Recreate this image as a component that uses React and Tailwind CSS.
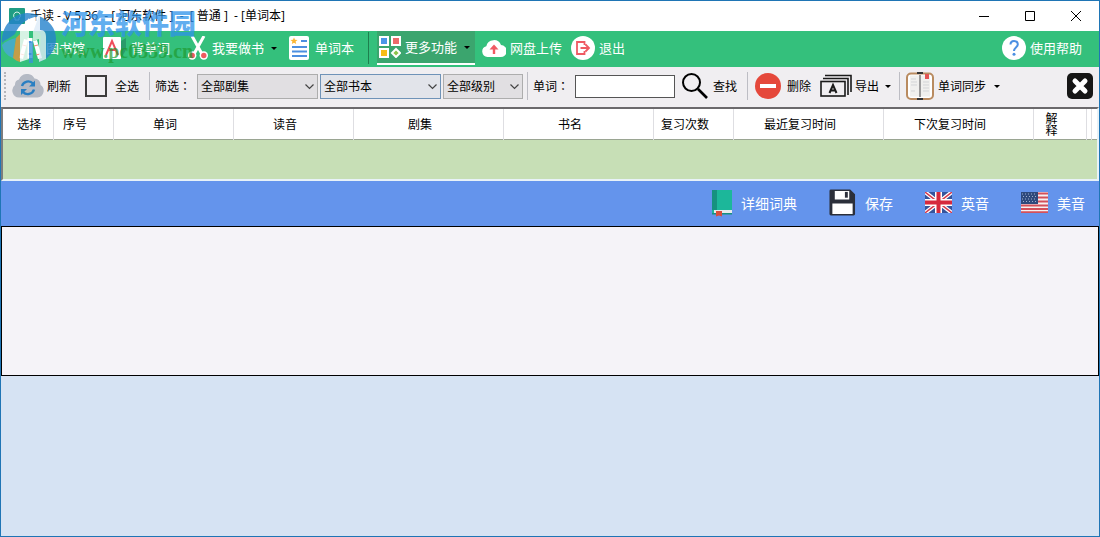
import React, { useState } from "react";

const columns = [
  { name: "选择", width: "w-[50px]", pad: "pl-[3px]" },
  { name: "序号", width: "w-[60px]", pad: "pr-4" },
  { name: "单词", width: "w-[120px]", pad: "pr-4" },
  { name: "读音", width: "w-[120px]", pad: "pr-4" },
  { name: "剧集", width: "w-[150px]", pad: "pr-4" },
  { name: "书名", width: "w-[150px]", pad: "pr-4" },
  { name: "复习次数", width: "w-[80px]", pad: "pr-4" },
  { name: "最近复习时间", width: "w-[150px]", pad: "pr-4" },
  { name: "下次复习时间", width: "w-[150px]", pad: "pr-4" },
  { name: "解释", width: "w-[53px]", pad: "pl-3 pr-7" },
  { name: "", width: "w-[5px]", pad: "" },
  { name: "", width: "w-auto", pad: "" },
];

function Caret() {
  return (
    <svg className="w-[6px] h-[3px] shrink-0" viewBox="0 0 6 3">
      <path d="M0 0h6L3 3z" fill="#000" />
    </svg>
  );
}

function LibraryIcon() {
  return (
    <svg className="w-6 h-6 shrink-0" viewBox="0 0 24 24">
      <path d="M6 3l4 1-5 19-4-1z" fill="#fff" />
      <path d="M9.500 2h5v20h-5z" fill="#fff" />
      <path d="M15 5l4-1 5 18-4 1z" fill="#fff" />
      <path d="M4.500 9l4 1M2.500 18l4 1M16 10l4-1M18 19l4-1" stroke="#ef8a72" />
      <path d="M10.500 6h3M10.500 18h3" stroke="#4c8fe0" strokeWidth="2" />
    </svg>
  );
}

function LetterIcon() {
  return (
    <svg className="w-6 h-6 shrink-0" viewBox="0 0 24 24">
      <path d="M18 5l5-3v12l-5 8z" fill="#2a9a6a" />
      <rect x="0" y="1" width="18" height="22" rx="1" fill="#fff" />
      <path d="M3 19L9 5l6 14M5 14h8" fill="none" stroke="#ef4d5c" strokeWidth="2" />
    </svg>
  );
}

function ScissorsIcon() {
  return (
    <svg className="w-5 h-6 shrink-0" viewBox="0 0 20 24">
      <path d="M4 0l10 18M16 0L6 18" stroke="#fff" strokeWidth="3" />
      <circle cx="4.200" cy="19.500" r="4.200" fill="#fff" />
      <circle cx="15.800" cy="19.500" r="4.200" fill="#fff" />
      <circle cx="4.200" cy="19.500" r="2.700" fill="#ee5a5e" />
      <circle cx="15.800" cy="19.500" r="2.700" fill="#ee5a5e" />
    </svg>
  );
}

function WordListIcon() {
  return (
    <svg className="w-[22px] h-6 shrink-0" viewBox="0 0 22 24">
      <rect width="20" height="24" rx="2" fill="#fff" />
      <path d="M5 1.500l1 2.300 2.500.2-1.900 1.600.6 2.500L5 6.800 2.800 8.100l.6-2.500L1.500 4 4 3.800z" fill="#fbb634" />
      <path d="M12 5h6M3 11h15M3 15.500h15M3 20h15" stroke="#4c8fe0" strokeWidth="1.800" />
    </svg>
  );
}

function MoreIcon() {
  return (
    <svg className="w-[22px] h-[22px] shrink-0" viewBox="0 0 22 22" stroke="#fff" strokeWidth="2">
      <rect x="1" y="1" width="8" height="8" fill="#4b96e8" />
      <rect x="13" y="1" width="8" height="8" fill="#ec6b6b" />
      <rect x="1" y="13" width="8" height="8" fill="#f6bd16" />
      <path d="M17 13l4 4-4 4-4-4z" fill="#8bc34a" />
    </svg>
  );
}

function UploadIcon() {
  return (
    <svg className="w-6 h-6 shrink-0" viewBox="0 0 24 24">
      <path d="M5.500 21a5.500 5.500 0 0 1-1.200-10.800A7.700 7.700 0 0 1 19 9 6 6 0 0 1 18.500 21z" fill="#fff" />
      <path d="M12 18v-6" stroke="#ef5a63" strokeWidth="2.400" />
      <path d="M7.500 13.500L12 8.500l4.500 5z" fill="#ef5a63" />
    </svg>
  );
}

function ExitIcon() {
  return (
    <svg className="w-6 h-6 shrink-0" viewBox="0 0 24 24">
      <circle cx="12" cy="12" r="12" fill="#fff" />
      <path d="M13.500 9V6H6v12h7.500v-3M9.500 12h8M14.500 8.500l3.500 3.500-3.500 3.500" fill="none" stroke="#ef5a63" strokeWidth="1.800" />
    </svg>
  );
}

function HelpIcon() {
  return (
    <svg className="w-6 h-6 shrink-0" viewBox="0 0 24 24">
      <circle cx="12" cy="12" r="12" fill="#fff" />
      <path d="M8.500 8.500C8.500 6 10 5 12 5s3.800 1.200 3.800 3.500C15.800 11 12 11.500 12 15" fill="none" stroke="#4b8fe2" strokeWidth="2" />
      <circle cx="12" cy="18.300" r="1.500" fill="#4b8fe2" />
    </svg>
  );
}

function RefreshIcon() {
  return (
    <svg className="w-8 h-6 shrink-0" viewBox="0 0 32 24">
      <path d="M7 23.500A7 7 0 0 1 3 11 5.500 5.500 0 0 1 7 5.500a8.500 8.500 0 0 1 15.500-1 6 6 0 0 1 6 6.500 6.800 6.800 0 0 1-3 12.500z" fill="#b4b9c4" />
      <path d="M10 12a6.500 6.500 0 0 1 11-2.500M22 15.500a6.500 6.500 0 0 1-11 2.500" fill="none" stroke="#2a7fc2" strokeWidth="2.400" />
      <path d="M23 6.500v6h-6zM9 21v-6h6z" fill="#2a7fc2" />
    </svg>
  );
}

function SearchIcon() {
  return (
    <svg className="w-7 h-7 shrink-0" viewBox="0 0 28 28" fill="none" stroke="#000">
      <circle cx="10.500" cy="10.500" r="8.500" strokeWidth="2" />
      <path d="M17 17l9 9" strokeWidth="2.600" />
    </svg>
  );
}

function DeleteIcon() {
  return (
    <svg className="w-[26px] h-[26px] shrink-0" viewBox="0 0 26 26">
      <circle cx="13" cy="13" r="13" fill="#e5483b" />
      <rect x="5" y="11" width="16" height="4" fill="#fff" />
    </svg>
  );
}

function ExportIcon() {
  return (
    <svg className="w-8 h-6 shrink-0" viewBox="0 0 32 24" fill="none" stroke="#1a1a1a">
      <path d="M5 1.500h26V18M3 4.500h25V21" strokeWidth="1.600" />
      <rect x="1" y="7.500" width="24" height="14.500" strokeWidth="1.600" />
      <path d="M9.500 19l3.500-8 3.500 8M11 16.500h4" strokeWidth="2" />
    </svg>
  );
}

function SyncIcon() {
  return (
    <svg className="w-7 h-7 shrink-0" viewBox="0 0 28 28">
      <rect x="1" y="1.500" width="26" height="25.500" rx="4" fill="#fff" stroke="#b98b60" strokeWidth="2" />
      <path d="M4 3.500h9v21H4zM15 3.500h9v21h-9z" fill="#f0f0ee" />
      <path d="M14 3v22" stroke="#9c9c9c" strokeWidth="2" />
      <path d="M5 7h5M5 10h6M5 13h6M5 19h4M17 10h6M17 13h6M17 16h6M17 19h6" stroke="#d3d5d7" />
      <path d="M11 1h6M11 27h6" stroke="#333" strokeWidth="2" />
      <path d="M19 2h4v5h-4z" fill="#e35454" />
    </svg>
  );
}

function CloseBoxIcon() {
  return (
    <svg className="w-7 h-7 shrink-0" viewBox="0 0 28 28">
      <rect x="1" y="1" width="26" height="26" rx="5" fill="#161616" />
      <path d="M9 9l10 10M19 9L9 19" stroke="#fff" strokeWidth="5" strokeLinecap="round" />
    </svg>
  );
}

function DictionaryIcon() {
  return (
    <svg className="w-[21px] h-7 shrink-0" viewBox="0 0 21 28">
      <path d="M1 1h20v24H1z" fill="#1cb79a" />
      <path d="M1 1h5v20H1z" fill="#16917f" />
      <path d="M3 21h18v3H3z" fill="#e8ecec" />
      <path d="M1 24h20v1.500H1z" fill="#16917f" />
      <path d="M5 22h6v5.500l-3-1-3 1z" fill="#d84d3d" />
    </svg>
  );
}

function SaveIcon() {
  return (
    <svg className="w-[27px] h-[27px] shrink-0" viewBox="0 0 28 28">
      <path d="M2 .5h20l5 5V26a1.500 1.500 0 0 1-1.500 1.500H2A1.500 1.500 0 0 1 .5 26V2A1.500 1.500 0 0 1 2 .5z" fill="#2b2f3a" />
      <path d="M6 2h15v9H6zM3.500 15h21v11h-21z" fill="#fff" />
      <path d="M16.500 3h3v6h-3z" fill="#2b2f3a" />
    </svg>
  );
}

function UkFlag() {
  return (
    <svg className="w-[27px] h-[21px] shrink-0" viewBox="0 0 27 21">
      <path d="M0 0h27v21H0z" fill="#35549c" />
      <path d="M0 0l27 21M27 0L0 21" stroke="#fff" strokeWidth="4" />
      <path d="M0 0l27 21M27 0L0 21" stroke="#d6394a" strokeWidth="1.400" />
      <path d="M13.500 0v21M0 10.500h27" stroke="#fff" strokeWidth="7" />
      <path d="M13.500 0v21M0 10.500h27" stroke="#d6293d" strokeWidth="4" />
    </svg>
  );
}

function UsFlag() {
  return (
    <svg className="w-[27px] h-[21px] shrink-0" viewBox="0 0 27 21">
      <path d="M0 0h27v21H0z" fill="#f6f1f1" />
      <path d="M0 1.500h27M0 5.500h27M0 9.500h27M0 13.500h27M0 17h27M0 20.300h27" stroke="#d4505a" strokeWidth="1.900" />
      <path d="M0 0h17v12H0z" fill="#2f4a7c" />
      <path d="M1 2h15M2 4.500h14M1 7h15M2 9.500h14" stroke="#9fb0cb" strokeDasharray="1 2" />
    </svg>
  );
}

function MenuButton({ icon, name, caret }) {
  return (
    <button className="flex items-center gap-1 whitespace-nowrap">
      {icon}
      <span>{name}</span>
      {caret && <span className="pl-[3px]"><Caret /></span>}
    </button>
  );
}

function Separator() {
  return <div className="w-px h-7 bg-[#bdbdc4] shrink-0" />;
}

function Colon() {
  return <span className="font-['Noto_Sans_CJK_TC',sans-serif]">：</span>;
}

function Dropdown({ label, width, look }) {
  return (
    <div className={"relative shrink-0 " + width}>
      <select aria-label={label} className={"appearance-none block w-full h-[25px] pl-[3px] border outline-none " + look}>
        <option>{label}</option>
      </select>
      <svg className="absolute right-1 top-[10px] w-[9px] h-[6px] pointer-events-none" viewBox="0 0 9 6">
        <path d="M.5.5l4 4 4-4" fill="none" stroke="#444" strokeWidth="1.200" />
      </svg>
    </div>
  );
}

function TitleBar() {
  return (
    <header className="h-[30px] bg-white flex items-center justify-between pl-2 text-xs text-black">
      <div className="flex items-center gap-[5px]">
        <svg className="w-4 h-4" viewBox="0 0 16 16">
          <rect width="16" height="16" rx="1" fill="#1f9d84" />
          <path d="M8 4a3.500 3.500 0 0 1 2 6.300V12H6v-1.700A3.500 3.500 0 0 1 8 4z" fill="none" stroke="#d7f2ea" />
        </svg>
        <h1 className="whitespace-pre font-['Open_Sans','Noto_Sans_CJK_SC',sans-serif]">千读 - V 5.36  - [ 河东软件 ]  -  [ 普通 ]  - [单词本]</h1>
      </div>
      <div className="flex">
        <button aria-label="最小化" className="w-[46px] h-7 flex items-center justify-center">
          <svg className="w-[10px] h-[10px]" viewBox="0 0 10 10"><path d="M0 5.500h10" stroke="#000" /></svg>
        </button>
        <button aria-label="最大化" className="w-[46px] h-7 flex items-center justify-center">
          <svg className="w-[10px] h-[10px]" viewBox="0 0 10 10"><path d="M.5.5h9v9h-9z" fill="none" stroke="#000" /></svg>
        </button>
        <button aria-label="关闭" className="w-[46px] h-7 flex items-center justify-center">
          <svg className="w-[10px] h-[10px]" viewBox="0 0 10 10"><path d="M0 0l10 10M10 0L0 10" stroke="#000" /></svg>
        </button>
      </div>
    </header>
  );
}

function MenuBar() {
  return (
    <nav className="h-9 pb-[2px] bg-[#34c07c] flex items-center justify-between px-[17px] text-[13px] text-white">
      <div className="flex items-center">
        <div className="flex items-center gap-[18px]">
          <MenuButton icon={<LibraryIcon />} name="图书馆" />
          <MenuButton icon={<LetterIcon />} name="背单词" />
          <MenuButton icon={<ScissorsIcon />} name="我要做书" caret />
        </div>
        <div className="pl-3">
          <MenuButton icon={<WordListIcon />} name="单词本" />
        </div>
        <div className="w-px h-8 ml-[14px] mr-2 bg-[#1d7f4e]" />
        <div className="flex h-[34px] pl-[2px] pr-[5px] bg-[#3ba56e] border-b-2 border-white">
          <MenuButton icon={<MoreIcon />} name="更多功能" caret />
        </div>
        <div className="flex items-center gap-[9px] pl-[7px]">
          <MenuButton icon={<UploadIcon />} name="网盘上传" />
          <MenuButton icon={<ExitIcon />} name="退出" />
        </div>
      </div>
      <MenuButton icon={<HelpIcon />} name="使用帮助" />
    </nav>
  );
}

function ToolBar() {
  const [all, setAll] = useState(false);
  const [word, setWord] = useState("");
  return (
    <div className="h-10 pb-[2px] bg-[#f0eef1] flex items-center justify-between pl-[3px] pr-[5px] text-xs text-black whitespace-nowrap">
      <div className="flex items-center">
        <div className="h-7 border-l-2 border-dotted border-[#b5b5ba] mr-[6px]" />
        <button className="flex items-center gap-[3px]"><RefreshIcon />刷新</button>
        <label className="flex items-center gap-2 ml-[14px] mr-[10px]">
          <input
            type="checkbox"
            checked={all}
            onChange={() => setAll(!all)}
            className="appearance-none w-[22px] h-[22px] border-2 border-[#3c3c3c] checked:bg-[#3c3c3c]"
          />
          全选
        </label>
        <Separator />
        <span className="ml-[5px] w-[42px]">筛选<Colon /></span>
        <div className="flex gap-[2px] mr-1">
          <Dropdown label="全部剧集" width="w-[121px]" look="bg-[#e1dfe2] border-[#adadad]" />
          <Dropdown label="全部书本" width="w-[121px]" look="bg-[#e2e4ea] border-[#6f93b8]" />
          <Dropdown label="全部级别" width="w-[80px]" look="bg-[#e1dfe2] border-[#adadad]" />
        </div>
        <Separator />
        <label className="flex items-center ml-[5px]">
          <span className="w-[42px]">单词<Colon /></span>
          <input
            type="text"
            value={word}
            onChange={(e) => setWord(e.target.value)}
            className="w-[100px] h-[23px] px-1 bg-white border border-[#555] outline-none"
          />
        </label>
        <button className="flex items-center gap-1 ml-[6px] mr-[10px]"><SearchIcon />查找</button>
        <Separator />
        <button className="flex items-center gap-[6px] ml-[7px]"><DeleteIcon />删除</button>
        <button className="flex items-center gap-[3px] ml-[9px] mr-2"><ExportIcon />导出<span className="pl-[3px]"><Caret /></span></button>
        <Separator />
        <button className="flex items-center gap-1 ml-[6px]"><SyncIcon />单词同步<span className="pl-1"><Caret /></span></button>
      </div>
      <button aria-label="关闭单词本"><CloseBoxIcon /></button>
    </div>
  );
}

function WordTable() {
  return (
    <div className="h-[74px] bg-[#c7dfb6] border-2 border-t-[#6b696c] border-l-[#7d7d7d] border-r-[#e8f2f8] border-b-[#e8f2f8]">
      <table className="w-full table-fixed border-collapse bg-white text-xs text-black">
        <thead>
          <tr className="h-[30px] border-b border-[#9aa592]">
            {columns.map((col, i) => (
              <th key={i} className={"p-0 font-normal leading-3 border-r border-[#dedee2] last:border-r-0 " + col.width + " " + col.pad}>
                {col.name}
              </th>
            ))}
          </tr>
        </thead>
      </table>
    </div>
  );
}

function ActionBar() {
  return (
    <div className="h-[45px] pb-[2px] bg-[#6494ec] flex items-center justify-end gap-8 pr-[14px] text-sm text-white">
      <button className="flex items-center gap-[9px]"><DictionaryIcon />详细词典</button>
      <button className="flex items-center gap-[9px]"><SaveIcon />保存</button>
      <button className="flex items-center gap-[9px]"><UkFlag />英音</button>
      <button className="flex items-center gap-[9px]"><UsFlag />美音</button>
    </div>
  );
}

function Watermark() {
  return (
    <div className="absolute left-0 top-0 flex pointer-events-none">
      <svg className="w-[56px] h-[66px]" viewBox="0 0 56 66" opacity=".8">
        <path d="M1 42C0 26 11 13 26 12c5 0 9 1 12 3-12 2-20 8-24 18-3 3-9 5-13 9z" fill="#2583cc" />
        <path d="M1 44c4-4 9-6 14-7l-3 20C6 55 2 50 1 44z" fill="#4aa8d8" />
        <path d="M38 15c10 4 17 12 17 23 0 11-7 20-17 23l2-25c0-4-3-6-8-5z" fill="#2583cc" />
        <path d="M19 30l9-13v41l-9 3z" fill="#fff" />
        <path d="M32 17l7-2v14c5 0 6 3 6 7v22l-7 3V38l-6 2z" fill="#fff" opacity=".85" />
        <path d="M15 37l4-4v28c-3-1-5-2-7-4z" fill="#e8953a" />
        <path d="M28 42l4-2v22h-4z" fill="#3a94d8" />
      </svg>
      <div className="pt-1 pl-1 whitespace-nowrap">
        <p className="text-[27px] leading-9 font-black text-[#2e93ea]/75">河东软件园</p>
        <p className="font-['Liberation_Serif',serif] text-[20px] leading-5 font-bold text-[#1f9a2f]/70">www.pc0359.cn</p>
      </div>
    </div>
  );
}

function App() {
  return (
    <div className="relative min-h-screen flex flex-col bg-[#d6e3f3] border border-[#1f75b5] font-['Noto_Sans_CJK_SC',sans-serif]">
      <TitleBar />
      <MenuBar />
      <ToolBar />
      <WordTable />
      <ActionBar />
      <textarea aria-label="解释" className="block w-full h-[150px] resize-none outline-none bg-[#f5f3f8] border border-black p-2 text-sm" />
      <Watermark />
    </div>
  );
}

export default App;
